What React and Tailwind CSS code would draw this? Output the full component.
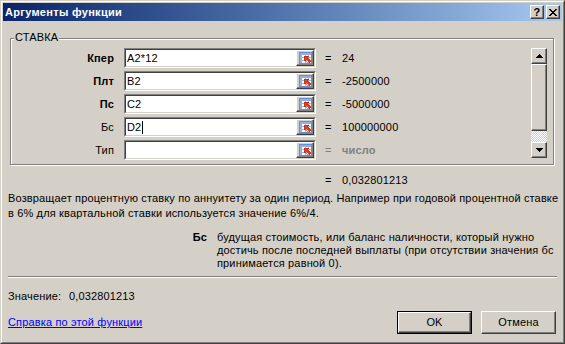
import React from "react";

/* ------------------------------ small drawings ----------------------------- */
const RefIcon = () => (
  <svg width="13" height="12" viewBox="0 0 13 12" shapeRendering="crispEdges">
    <rect x="0.5" y="0.5" width="12" height="11" fill="#ffffff" stroke="#6b8fc9" />
    <rect x="1" y="1" width="11" height="2" fill="#8fb1e8" />
    <rect x="1" y="1" width="2" height="10" fill="#8fb1e8" />
    <path d="M1 5.5h11M1 8.5h11M6.5 3v8M9.5 3v8" stroke="#9db5dc" />
    <path d="M5 4h5l-1.5 1.5 3.5 3.5-2 2-3.5-3.5L5 9z" fill="#e8401c" stroke="#b02a10" strokeWidth="0.6" />
  </svg>
);

const ArrowUp = () => (
  <svg width="7" height="4" viewBox="0 0 7 4" shapeRendering="crispEdges">
    <path d="M3 0h1v1H3zM2 1h3v1H2zM1 2h5v1H1zM0 3h7v1H0z" fill="#000" />
  </svg>
);

const ArrowDown = () => (
  <svg width="7" height="4" viewBox="0 0 7 4" shapeRendering="crispEdges">
    <path d="M0 0h7v1H0zM1 1h5v1H1zM2 2h3v1H2zM3 3h1v1H3z" fill="#000" />
  </svg>
);

const CloseGlyph = () => (
  <svg width="8" height="7" viewBox="0 0 8 7" shapeRendering="crispEdges">
    <path d="M0 0h2v1H0zM6 0h2v1H6zM1 1h2v1H1zM5 1h2v1H5zM2 2h4v1H2zM3 3h2v1H3zM2 4h4v1H2zM1 5h2v1H1zM5 5h2v1H5zM0 6h2v1H0zM6 6h2v1H6z" fill="#000" />
  </svg>
);

/* ------------------------------- 3d helpers -------------------------------- */
const raised =
  "border border-t-white border-l-white border-r-[#404040] border-b-[#404040] shadow-[inset_-1px_-1px_0_#808080] bg-[#d4d0c8]";

function ArgRow({ label, bold, text, caret, value, muted }) {
  return (
    <div className="flex h-[20px] items-center">
      <div className={`w-[103px] text-right ${bold ? "font-bold" : ""}`}>{label}</div>
      <div className="ml-[10px] h-[20px] w-[192px] border border-t-[#808080] border-l-[#808080] border-r-white border-b-white">
        <div className="flex h-full border border-t-[#404040] border-l-[#404040] border-r-[#d4d0c8] border-b-[#d4d0c8] bg-white">
          <div className="flex flex-1 items-center pl-[1px] leading-[16px]">
            {text}
            {caret && <span className="ml-[1px] inline-block h-[13px] w-px bg-black" />}
          </div>
          <div className={`flex h-[16px] w-[18px] items-center justify-center ${raised}`}>
            <RefIcon />
          </div>
        </div>
      </div>
      <div className={`ml-[9px] w-[17px] ${muted ? "text-[#808080]" : ""}`}>=</div>
      <div className={muted ? "font-bold text-[#808080]" : ""}>{value}</div>
    </div>
  );
}

function ScrollBar() {
  return (
    <div className="flex h-[110px] w-[16px] flex-col bg-[repeating-conic-gradient(#ffffff_0%_25%,#d4d0c8_0%_50%)] bg-[length:2px_2px]">
      <div className={`flex h-[16px] items-center justify-center ${raised}`}>
        <ArrowUp />
      </div>
      <div className={`h-[67px] ${raised}`} />
      <div className="flex-1" />
      <div className={`flex h-[16px] items-center justify-center ${raised}`}>
        <ArrowDown />
      </div>
    </div>
  );
}

export default function App() {
  return (
    <div className="h-[344px] w-[565px] border border-t-[#d4d0c8] border-l-[#d4d0c8] border-r-[#404040] border-b-[#404040] font-['Liberation_Sans','Arial',sans-serif] text-[11px] leading-[13px] tracking-[0.15px] text-black">
      <div className="h-full border border-t-white border-l-white border-r-[#808080] border-b-[#808080] bg-[#d4d0c8] p-px">
        {/* Title bar */}
        <div className="flex h-[18px] items-center bg-gradient-to-r from-[#0a246a] to-[#a6caf0] pl-[2px] pr-[2px]">
          <div className="flex-1 font-bold tracking-[0.3px] text-white">Аргументы функции</div>
          <div className={`flex h-[14px] w-[14px] items-center justify-center text-[11px] font-bold leading-none ${raised}`}>?</div>
          <div className={`ml-[2px] flex h-[14px] w-[14px] items-center justify-center ${raised}`}>
            <CloseGlyph />
          </div>
        </div>

        {/* Arguments group */}
        <div className="relative ml-[7px] mt-[17px] h-[127px] w-[544px] border border-[#808080] shadow-[inset_1px_1px_0_#fff,1px_1px_0_#fff]">
          <span className="absolute -top-[8px] left-[3px] bg-[#d4d0c8] px-px">СТАВКА</span>
          <div className="flex pr-[6px] pt-[9px]">
            <div className="flex flex-1 flex-col gap-[3px]">
              <ArgRow label="Кпер" bold text="A2*12" value="24" />
              <ArgRow label="Плт" bold text="B2" value="-2500000" />
              <ArgRow label="Пс" bold text="C2" value="-5000000" />
              <ArgRow label="Бс" text="D2" caret value="100000000" />
              <ArgRow label="Тип" value="число" muted />
            </div>
            <ScrollBar />
          </div>
        </div>

        {/* Result */}
        <div className="mt-[9px] flex pl-[322px]">
          <span className="w-[17px]">=</span>
          <span>0,032801213</span>
        </div>

        {/* Description */}
        <div className="mt-[4px] whitespace-nowrap pl-[5px] leading-[15px]">
          Возвращает процентную ставку по аннуитету за один период. Например при годовой процентной ставке
          <br />в 6% для квартальной ставки используется значение 6%/4.
        </div>

        <div className="mt-[10px] flex">
          <div className="w-[204px] text-right font-bold">Бс</div>
          <div className="ml-[10px] whitespace-nowrap">
            будущая стоимость, или баланс наличности, который нужно
            <br />
            достичь после последней выплаты (при отсутствии значения бс
            <br />
            принимается равной 0).
          </div>
        </div>

        {/* Separator */}
        <div className="mx-[5px] mt-[6px] h-[2px] border-t border-b border-t-[#808080] border-b-white" />

        <div className="mt-[12px] flex pl-[5px]">
          <span className="w-[61px]">Значение:</span>
          <span>0,032801213</span>
        </div>

        {/* Footer */}
        <div className="mt-[8px] flex items-center pl-[5px] pr-[6px]">
          <a href="#" className="flex-1 text-[#0000ff] underline">
            Справка по этой функции
          </a>
          <button type="button" className="h-[23px] w-[75px] border border-black">
            <div className={`flex h-full w-full items-center justify-center ${raised}`}>OK</div>
          </button>
          <button type="button" className={`ml-[9px] flex h-[23px] w-[75px] items-center justify-center ${raised}`}>
            Отмена
          </button>
        </div>
      </div>
    </div>
  );
}
